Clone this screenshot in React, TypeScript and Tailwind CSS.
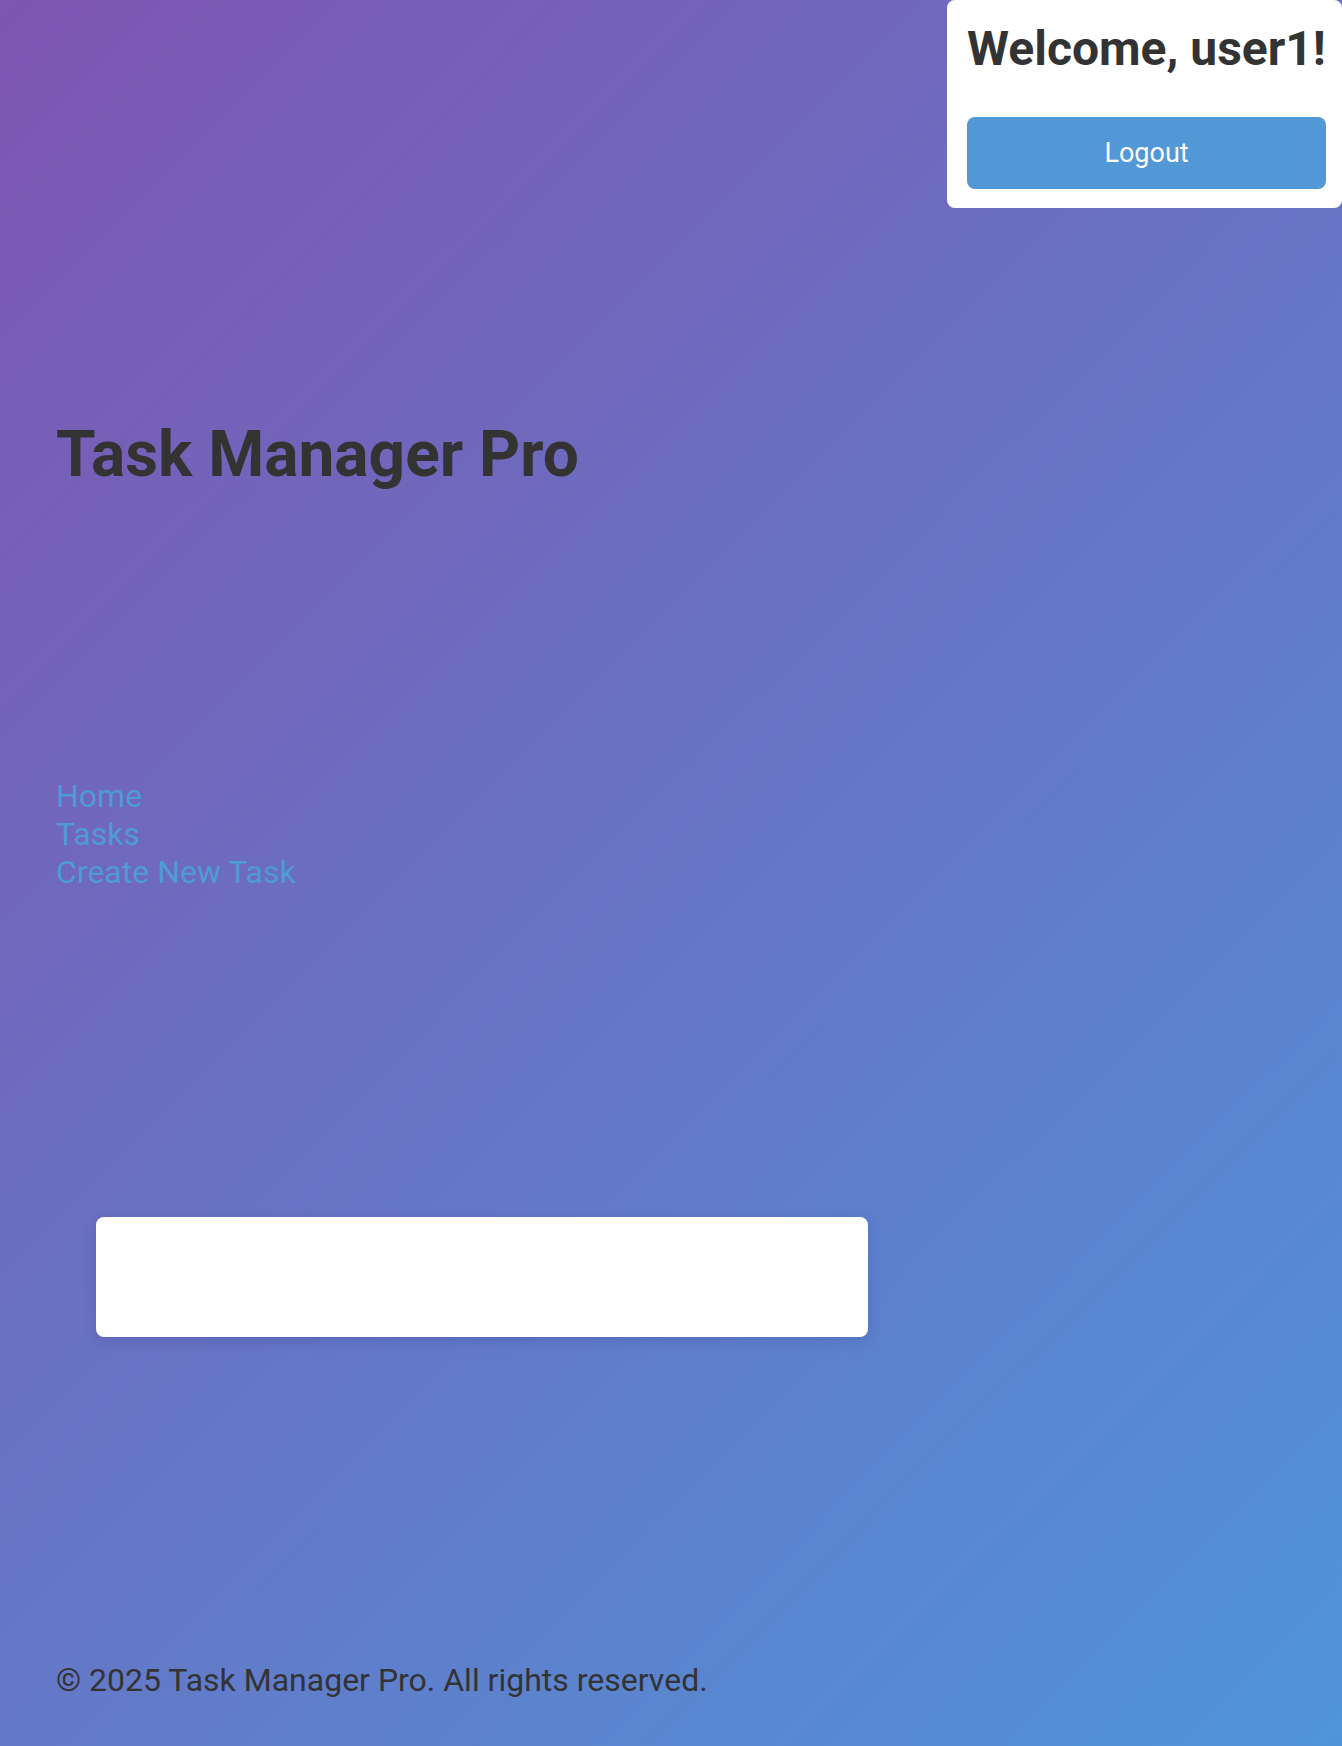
import React from "react";

export default function App() {
  return (
    <div className="relative min-h-[1746px] w-full overflow-hidden bg-[linear-gradient(135deg,#7e55b1_0%,#4f94d9_100%)] font-['Roboto','Liberation_Sans',sans-serif] text-[#333333]">
      <div className="absolute right-0 top-0 w-[395px] rounded-lg bg-white pb-[19px] pl-5 pr-4 pt-5">
        <h2 className="text-[48px] font-bold leading-[57.6px]">Welcome, user1!</h2>
        <button className="mt-[39px] h-[72px] w-[359px] rounded-lg bg-[#5297d6] pt-[2px] text-[27px] leading-none text-white">
          Logout
        </button>
      </div>

      <div className="flex flex-col pl-[56px] pt-[417px]">
        <h1 className="text-[64px] font-bold leading-[76px]">Task Manager Pro</h1>

        <nav className="mt-[284px] flex flex-col items-start text-[32px] leading-[38px] text-[#4f9ad8]">
          <a href="#">Home</a>
          <a href="#">Tasks</a>
          <a href="#">Create New Task</a>
        </nav>

        <div className="ml-[40px] mt-[326px] h-[120px] w-[772px] rounded-lg bg-white shadow-[0_4px_14px_rgba(40,40,120,0.18)]" />

        <footer className="mt-[325px] text-[32px] leading-[37.5px]">
          © 2025 Task Manager Pro. All rights reserved.
        </footer>
      </div>
    </div>
  );
}
